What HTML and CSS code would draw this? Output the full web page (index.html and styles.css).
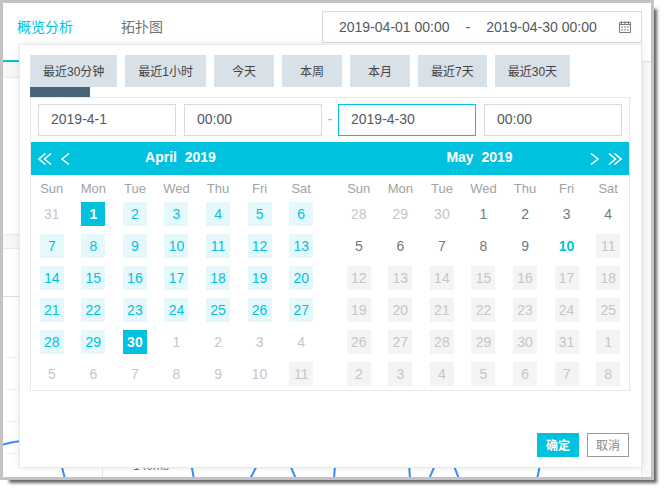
FILE: index.html
```html
<!DOCTYPE html>
<html lang="zh-CN">
<head>
  <meta charset="UTF-8" />
  <title>概览分析</title>
  <meta name="viewport" content="width=device-width, initial-scale=1.0" />
  <link rel="stylesheet" href="styles.css">
</head>
<body>

<div class="window">
  <header class="topbar">
    <nav class="tabs">
      <a class="tab active" href="#overview">概览分析</a>
      <a class="tab" href="#topology">拓扑图</a>
    </nav>
    <button type="button" class="range">
      <span>2019-04-01 00:00</span>
      <span>-</span>
      <span>2019-04-30 00:00</span>
      <svg class="range-icon" width="12" height="12" viewBox="0 0 12 12" fill="none" stroke="#777b82">
        <path d="M.5 1.5h11v10H.5z" />
        <path d="M0 3.500h12" />
        <path d="M2.500 0v3M6 0v3M9.500 0v3" />
        <path d="M2 6h8M2 9h8" stroke-dasharray="2 1" />
      </svg>
    </button>
  </header>

  <main class="content">
    <section class="card"></section>
    <section class="card chart">
      <div class="chart-head"></div>
      <svg class="plot" width="640" height="181">
        <path class="gridline" d="M3 60.5h96M3 92.5h96M3 124.5h96M3 156.5h96" />
        <path class="axis" d="M99.5 110v71" />
        <path class="line" d="M0 147.500Q10 145 18 144Q50 140 58 166L62 182" />
        <path class="line" d="M185 150L191 182M247 182L262 153M279 149L293 182M331 182Q332 165 334 150M405 150L407 182M426 182L440 150M444 150L456 182M534 182L541 150" />
        <text x="130" y="173">140ms</text>
      </svg>
    </section>
  </main>

  <!-- Date range panel -->
  <div class="picker">
    <div class="presets">
      <button type="button">最近30分钟</button>
      <button type="button">最近1小时</button>
      <button type="button">今天</button>
      <button type="button">本周</button>
      <button type="button">本月</button>
      <button type="button">最近7天</button>
      <button type="button">最近30天</button>
      <button type="button" class="current">自定义</button>
    </div>

    <div class="calendar">
      <div class="fields">
        <input type="text" value="2019-4-1" aria-label="开始日期" />
        <input type="text" value="00:00" aria-label="开始时间" />
        <span class="dash">-</span>
        <input type="text" class="focused" value="2019-4-30" aria-label="结束日期" />
        <input type="text" value="00:00" aria-label="结束时间" />
      </div>

      <div class="months">
        <div class="month-head">
          <div class="arrows">
            <button type="button" aria-label="上一年"><svg width="14" height="12" viewBox="0 0 14 12"><path d="M7.500 .5L1 6l6.500 5.500M13 .5L6.500 6l6.500 5.500" /></svg></button>
            <button type="button" aria-label="上个月"><svg width="9" height="12" viewBox="0 0 9 12"><path d="M8 .5L1 6l7 5.500" /></svg></button>
          </div>
          <span>April&nbsp; 2019</span>
        </div>
        <div class="month-head">
          <span>May&nbsp; 2019</span>
          <div class="arrows next">
            <button type="button" aria-label="下个月"><svg width="9" height="12" viewBox="0 0 9 12"><path d="M1 .5L8 6l-7 5.500" /></svg></button>
            <button type="button" aria-label="下一年"><svg width="14" height="12" viewBox="0 0 14 12"><path d="M1 .5L7.500 6 1 11.500M6.500 .5L13 6l-6.500 5.500" /></svg></button>
          </div>
        </div>
      </div>

      <div class="grids">
        <table class="days" id="april"></table>
        <table class="days" id="may"></table>
      </div>
    </div>

    <div class="actions">
      <button type="button" class="ok">确定</button>
      <button type="button" class="cancel">取消</button>
    </div>
  </div>
</div>

<script src="script.js"></script>
</body>
</html>
```
FILE: styles.css
```css
:root {
  --cyan: #00c1de;
  --range: #e5f9fd;
  --line: #d9dadc;
  --text: #55585d;
}

* {
  box-sizing: border-box;
}

body {
  margin: 0;
  height: 100vh;
  padding: 0 10px 10px 0;
  background: #fff;
  color: var(--text);
  font-family: "Liberation Sans", "Noto Sans CJK SC", sans-serif;
  font-size: 14px;
}

button,
input {
  font-family: inherit;
  color: inherit;
  margin: 0;
  border-radius: 0;
}

button {
  border: none;
  padding: 0;
  background: none;
  cursor: pointer;
}

.window {
  position: relative;
  display: flex;
  flex-direction: column;
  height: 100%;
  overflow: hidden;
  border: 3px solid #c3c3c3;
  background: #f5f7f9;
}

body::before {
  content: "";
  position: fixed;
  inset: 6px 10px 10px 6px;
  box-shadow: 3px 3px 3px #666;
}

.topbar {
  display: flex;
  justify-content: space-between;
  height: 59px;
  padding: 8px 9px 0 0;
  background: #fff;
  border-bottom: 1px solid #dfe2e6;
}

.tabs {
  display: flex;
  height: 51px;
  gap: 20px;
}

.tab {
  padding: 0 14px;
  line-height: 32px;
  color: #70747a;
  text-decoration: none;
}

.tab.active {
  color: var(--cyan);
  border-bottom: 2px solid var(--cyan);
}

.range {
  display: flex;
  align-items: center;
  gap: 16px;
  width: 320px;
  height: 32px;
  padding: 0 10px 0 16px;
  border: 1px solid var(--line);
  background: #fff;
  font-size: 14px;
}

.range-icon {
  margin-left: auto;
}

.content {
  flex: 1;
  display: flex;
  flex-direction: column;
  gap: 13px;
  padding: 15px 9px 0 0;
}

.card {
  flex: none;
  height: 158px;
  background: #fff;
  border: 1px solid #e7e9ec;
  border-left: none;
}

.chart {
  flex: 1;
  overflow: hidden;
}

.chart-head {
  height: 48px;
  border-bottom: 1px solid #dcdee1;
}

.plot {
  display: block;
  fill: none;
}

.plot text {
  fill: #777;
  font-size: 12px;
}

.gridline {
  stroke: #e8e8e8;
  stroke-dasharray: 4 2;
}

.axis {
  stroke: #e5e5e5;
}

.line {
  stroke: #3b8cf5;
  stroke-width: 2;
}

/* Panel */
.picker {
  position: absolute;
  top: 41px;
  left: 16px;
  right: 9px;
  bottom: 9px;
  display: flex;
  flex-direction: column;
  padding: 10px 11px 10px 10px;
  background: #fff;
  border: 1px solid #e7e9ec;
  box-shadow: 0 0 6px rgba(0, 0, 0, 0.1);
}

.presets {
  display: flex;
  flex-wrap: wrap;
  column-gap: 8px;
  height: 42px;
  overflow: hidden;
}

.presets button {
  min-width: 60px;
  height: 32px;
  padding: 0 13px 2px;
  background: #d9e1e8;
  color: #444;
  font-size: 12px;
}

.presets .current {
  padding: 0 12px 2px;
  background: #49657a;
  color: #fff;
}

.calendar {
  border: 1px solid #e7e9ec;
}

.fields {
  display: flex;
  gap: 8px;
  padding: 6px 7px;
}

.fields input {
  flex: 1;
  min-width: 0;
  height: 32px;
  padding: 0 12px 2px;
  border: 1px solid var(--line);
  font-size: 14px;
  outline: none;
}

.fields input.focused,
.fields input:focus {
  border-color: var(--cyan);
}

.dash {
  width: 16px;
  margin: 0 -8px;
  line-height: 30px;
  text-align: center;
  color: #aaa;
}

.months {
  display: flex;
  height: 33px;
  background: var(--cyan);
  color: #fff;
}

.month-head {
  position: relative;
  flex: 1;
  text-align: center;
  font-weight: bold;
  line-height: 31px;
}

.arrows {
  position: absolute;
  top: 0;
  left: 7px;
  display: flex;
  gap: 9px;
  height: 33px;
}

.arrows.next {
  left: auto;
  right: 7px;
}

.arrows svg {
  display: block;
  fill: none;
  stroke: #fff;
  stroke-width: 1.5;
}

.grids {
  display: flex;
  gap: 16px;
}

.days {
  flex: 1;
  width: 100%;
  table-layout: fixed;
  border-collapse: collapse;
}

.days th {
  height: 23px;
  padding: 5px 0 0;
  color: #a0a2a5;
  font-size: 13px;
  font-weight: normal;
  line-height: 18px;
  vertical-align: bottom;
}

.days td {
  height: 32px;
  padding: 0;
  text-align: center;
}

.days button {
  display: block;
  width: 24px;
  height: 24px;
  margin: 0 auto;
  color: #75787c;
  font-size: 14px;
  line-height: 22px;
}

.days .out {
  color: #c5c6c8;
}

.days .off {
  background: #f4f4f4;
  color: #c5c6c8;
}

.days .in {
  background: var(--range);
  color: var(--cyan);
}

.days .picked {
  background: var(--cyan);
  color: #fff;
  font-weight: bold;
}

.days .today {
  color: var(--cyan);
  font-weight: bold;
}

.actions {
  display: flex;
  justify-content: flex-end;
  gap: 8px;
  margin: auto 1px 0 0;
}

.actions button {
  width: 42px;
  height: 24px;
  padding-bottom: 2px;
  font-size: 12px;
}

.actions .ok {
  background: var(--cyan);
  color: #fff;
  font-weight: bold;
}

.actions .cancel {
  border: 1px solid #999;
  color: #888;
}
```
FILE: script.js
```javascript
const names = ['Sun', 'Mon', 'Tue', 'Wed', 'Thu', 'Fri', 'Sat'];
const today = new Date(2019, 4, 10);
const start = new Date(2019, 3, 1);
const end = new Date(2019, 3, 30);

function dayClass(date, month) {
  if (date > today) return 'off';
  if (date.getMonth() !== month) return 'out';
  if (+date === +start || +date === +end) return 'picked';
  if (date > start && date < end) return 'in';
  if (+date === +today) return 'today';
  return '';
}

function drawMonth(id, month) {
  const first = new Date(2019, month, 1).getDay();
  let html = '<thead><tr>' + names.map(n => `<th>${n}</th>`).join('') + '</tr></thead><tbody>';
  for (let row = 0; row < 6; row++) {
    html += '<tr>';
    for (let col = 0; col < 7; col++) {
      const date = new Date(2019, month, 1 - first + row * 7 + col);
      html += `<td><button type="button" class="${dayClass(date, month)}">${date.getDate()}</button></td>`;
    }
    html += '</tr>';
  }
  document.getElementById(id).innerHTML = html + '</tbody>';
}

drawMonth('april', 3);
drawMonth('may', 4);
```
